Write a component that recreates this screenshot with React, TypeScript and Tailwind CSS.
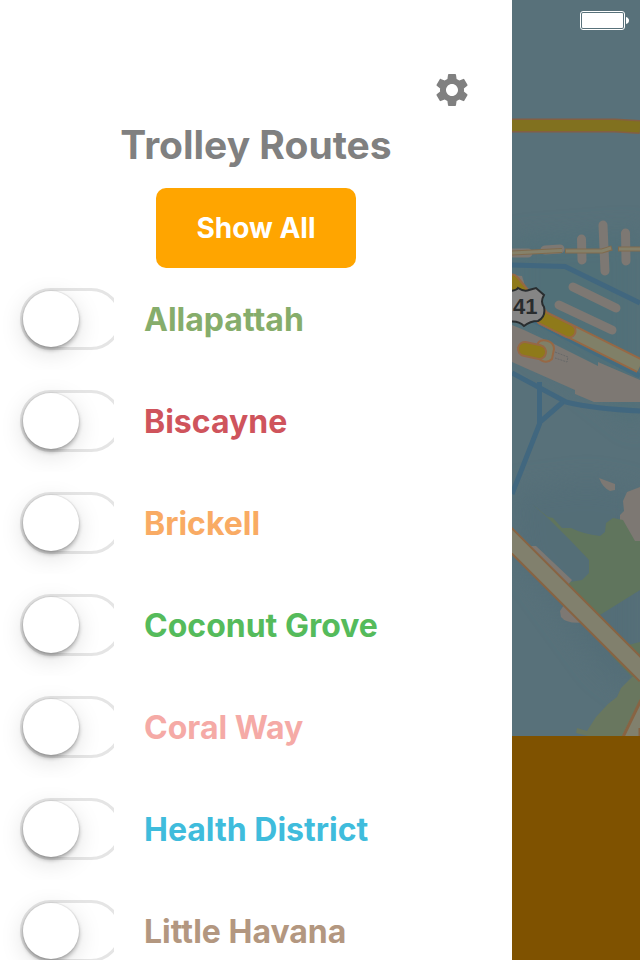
import { MdSettings } from "react-icons/md";

const routes = [
  { id: "allapattah", name: "Allapattah", color: "text-[#86ad6b]" },
  { id: "biscayne", name: "Biscayne", color: "text-[#cf545c]" },
  { id: "brickell", name: "Brickell", color: "text-[#f9ab64]" },
  { id: "coconut-grove", name: "Coconut Grove", color: "text-[#55bb5b]" },
  { id: "coral-way", name: "Coral Way", color: "text-[#f5aaa6]" },
  { id: "health-district", name: "Health District", color: "text-[#3fbcdc]" },
  { id: "little-havana", name: "Little Havana", color: "text-[#b39780]" },
];

function RouteRow({ id, name, color }: { id: string; name: string; color: string }) {
  return (
    <li className="flex h-[102px] items-center">
      <div className="flex h-full w-[114px] shrink-0 items-center overflow-hidden pl-5">
        <input
          id={id}
          type="checkbox"
          role="switch"
          className="h-[62px] w-[102px] shrink-0 appearance-none rounded-full border-[3px] border-[#e5e5e5] bg-white before:block before:size-14 before:rounded-full before:bg-white before:shadow-[0_0_1px_1px_rgba(0,0,0,0.06),0_3px_4px_rgba(0,0,0,0.28),0_6px_24px_rgba(0,0,0,0.13)] checked:bg-[#4cd964] checked:before:translate-x-10"
        />
      </div>
      <label htmlFor={id} className={`pt-0.5 pl-[30px] text-[32px] leading-10 font-bold ${color}`}>
        {name}
      </label>
    </li>
  );
}

function MapView() {
  return (
    <svg
      viewBox="512 0 128 736"
      preserveAspectRatio="xMinYMin slice"
      className="min-h-0 w-full flex-1"
      role="img"
      aria-label="Map"
    >
      <defs>
        <filter id="soft" x="-50%" y="-50%" width="200%" height="200%">
          <feGaussianBlur stdDeviation="12" />
        </filter>
      </defs>
      <rect x="512" width="400" height="736" fill="#58717a" />
      <g filter="url(#soft)" fill="#507078" opacity="0.75">
        <path d="M512 240L640 230V430L512 330Z" />
        <path d="M512 490L590 480L640 490V700L600 670L520 560Z" fill="#526d77" />
      </g>

      <path d="M512 125.500H615L640 127" fill="none" stroke="#845f43" strokeWidth="14" />
      <path d="M512 125.500H615L640 127" fill="none" stroke="#81711f" strokeWidth="11" />

      <g fill="none" stroke="#7d7873" strokeLinecap="round" strokeWidth="9">
        <path d="M581.500 239L582 260M603 225L605 271M625.500 233L626 261" />
        <path d="M573 287L616 308M559 305L612 330" />
        <path d="M545 250L560 249M512 253H528" />
      </g>
      <g fill="none" strokeWidth="5" stroke="#806b4e">
        <path d="M512 253L562 250.500M565 251H602L612 248M618 249H640" />
        <path d="M512 253L562 250.500M566 251H602L611 248M619 249H640" stroke="#85816a" strokeWidth="3" />
      </g>
      <path d="M512 265L565 266.500L640 303" fill="none" stroke="#41677f" strokeWidth="5" />
      <path d="M512 275L522 276L526 289L512 289Z" fill="#7d7873" />

      <path d="M525 316L640 376" fill="none" stroke="#446c80" strokeWidth="5" />
      <path d="M512 325L524 330L552 343L598 366V362L640 380V402H594L575 394V390L512 362Z" fill="#7d7873" />
      <path d="M512 281L543 318L574 333L640 366" fill="none" stroke="#966845" strokeWidth="15" />
      <path d="M574 333L640 366" fill="none" stroke="#808068" strokeWidth="11" />
      <path d="M512 281L543 318L569 331" fill="none" stroke="#966845" strokeWidth="15" strokeLinecap="round" />
      <path d="M512 281L543 318L569 331" fill="none" stroke="#8f7a1a" strokeWidth="11" strokeLinecap="round" />

      <path d="M538 343Q541 339 548 341Q554 343 554 349L552 359Q546 365 538 358Z" fill="#808068" stroke="#966845" strokeWidth="2" />
      <path d="M525 349L539 352" fill="none" stroke="#966845" strokeWidth="16" strokeLinecap="round" />
      <path d="M525 349L539 352" fill="none" stroke="#8f7a1a" strokeWidth="12" strokeLinecap="round" />
      <path d="M555 352L568 357L567 362L555 358" fill="none" stroke="#686969" strokeDasharray="2 1" />

      <g fill="none" stroke="#41677f" strokeWidth="5">
        <path d="M512 373L566 402Q595 409 640 411" />
        <path d="M539.500 382V424L512 494M540 422L563 402" />
      </g>

      <path d="M599 478L615 484V490L610 491Q603 488 599 478Z" fill="#7d7873" />
      <path d="M640 487L627 492L623 501L624 511L620 515V522L634 541H640Z" fill="#7d7873" />
      <path
        d="M532 504L548 517L553 518L562 528H571Q583 534 600 536L605 532L606 523L613 518L623 520L635 541H640V590L600 615L565 590L570 582L582 580L589 573V560L571 541L548 518Z"
        fill="#60755d"
      />
      <path d="M640 642L628 645L610 654L632 677L640 680Z" fill="#60755d" />
      <path d="M530 546L536 546L572 580L567 586Z" fill="#7d7873" />
      <path d="M564 605L560 611L561 617Q567 625 588 622L570 604Z" fill="#7d7873" />
      <path d="M632 677L621 688L617 697L608 704L596 717L587 731L577 728L576 733L588 736H640V677Z" fill="#69775f" />
      <path d="M505 534L646 675" fill="none" stroke="#886443" strokeWidth="20" />
      <path d="M505 534L646 675" fill="none" stroke="#81806d" strokeWidth="16" />
      <path d="M640 700L622 736H640Z" fill="#81806d" />
      <path d="M641 700L623 737M640 728V736" fill="none" stroke="#886443" strokeWidth="3" />

      <path
        d="M508 291Q516 291 518 288Q524 292 529 290L536 288L544 295Q540 302 544 307Q546 317 538 321Q530 321 524 326Q518 320 508 322Z"
        fill="#858585"
        stroke="#292d2f"
        strokeWidth="2"
      />
      <text x="513" y="314" fontFamily="Liberation Sans, sans-serif" fontSize="22" fontWeight="700" fill="#292c2d">
        41
      </text>
    </svg>
  );
}

function Battery() {
  return (
    <svg viewBox="0 0 50 20" className="absolute top-[11px] right-2.5 h-5 w-[50px]" role="img" aria-label="Battery full">
      <rect x="0.500" y="0.500" width="44" height="18" rx="2.500" fill="none" stroke="white" />
      <rect x="2" y="2" width="41" height="15" rx="1" fill="white" />
      <path d="M46 6Q49 7 49 9.500Q49 12 46 13Z" fill="white" />
    </svg>
  );
}

export default function App() {
  return (
    <div className="flex h-screen overflow-hidden bg-white font-['Inter',sans-serif]">
      <aside className="flex w-4/5 flex-col overflow-hidden bg-white">
        <header className="flex flex-col items-center pt-[70px]">
          <button type="button" aria-label="Settings" className="mr-10 self-end text-[#808080]">
            <MdSettings className="size-10" />
          </button>
          <h1 className="mt-[11px] text-[39px] leading-12 font-bold text-[#808080]">Trolley Routes</h1>
          <button
            type="button"
            className="mt-[19px] h-20 w-[200px] rounded-[10px] bg-[#ffa500] text-[28px] font-bold text-white"
          >
            Show All
          </button>
        </header>
        <ul>
          {routes.map((route) => (
            <RouteRow key={route.id} {...route} />
          ))}
        </ul>
      </aside>
      <main className="relative flex flex-1 flex-col overflow-hidden bg-[#58717a]">
        <MapView />
        <Battery />
        <div className="h-56 shrink-0 bg-[#7f5200]" />
      </main>
    </div>
  );
}
